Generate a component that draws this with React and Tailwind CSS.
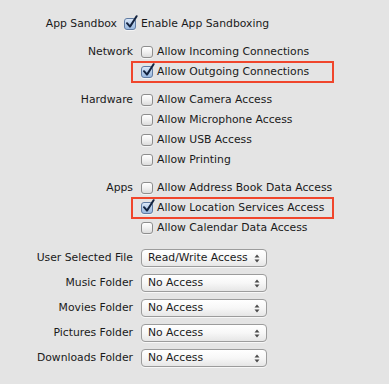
import React from "react";

function Check({ checked }) {
  return (
    <span className="relative inline-block w-[12px] h-[12px] shrink-0">
      <span
        className={
          checked
            ? "absolute inset-0 rounded-[3px] border border-[#5f7ba3] bg-gradient-to-b from-[#dbe8f8] via-[#b5cdea] to-[#9ab9e0] shadow-[0_1px_0_rgba(255,255,255,0.6)]"
            : "absolute inset-0 rounded-[3px] border border-[#8e8e8e] bg-gradient-to-b from-[#ffffff] via-[#f1f1f1] to-[#dcdcdc] shadow-[0_1px_0_rgba(255,255,255,0.6)]"
        }
      />
      {checked && (
        <svg
          className="absolute left-[1px] top-[-3px]"
          width="13"
          height="14"
          viewBox="0 0 13 14"
        >
          <path
            d="M2 8.2 L5 11.6 L11.6 1.2"
            fill="none"
            stroke="#13233f"
            strokeWidth="2"
            strokeLinecap="round"
            strokeLinejoin="round"
          />
        </svg>
      )}
    </span>
  );
}

function Row({ label, text, checked, highlight }) {
  return (
    <div className="flex items-center h-[20px]">
      <div className="w-[133px] text-right shrink-0">{label}</div>
      <div className="relative flex items-center h-[20px] ml-[8px]">
        {highlight && (
          <span className="absolute left-[-10px] top-[-1px] w-[203px] h-[22px] border-[2px] border-[#f0462c]" />
        )}
        <Check checked={checked} />
        <span className="ml-[4px]">{text}</span>
      </div>
    </div>
  );
}

function Select({ label, value }) {
  return (
    <div className="flex items-center h-[18px]">
      <div className="w-[133px] text-right shrink-0">{label}</div>
      <div className="ml-[8px] w-[126px] h-[18px] rounded-[4px] border border-[#9c9c9c] bg-gradient-to-b from-[#ffffff] via-[#f7f7f7] to-[#e6e6e6] shadow-[0_1px_0_rgba(255,255,255,0.7)] flex items-center pl-[6px] pr-[6px]">
        <span className="flex-1">{value}</span>
        <svg width="6" height="9" viewBox="0 0 6 9">
          <path d="M0.5 3.5 L3 0.5 L5.5 3.5 Z" fill="#4a4a4a" />
          <path d="M0.5 5.5 L3 8.5 L5.5 5.5 Z" fill="#4a4a4a" />
        </svg>
      </div>
    </div>
  );
}

export default function App() {
  return (
    <div className="w-[389px] h-[384px] bg-[#e4e4e4] font-['DejaVu_Sans',sans-serif] text-[10.8px] text-[#1a1a1a] pt-[14px]">
      <div className="flex items-center h-[20px]">
        <div className="w-[117px] text-right shrink-0">App Sandbox</div>
        <div className="flex items-center ml-[7px]">
          <Check checked />
          <span className="ml-[5px]">Enable App Sandboxing</span>
        </div>
      </div>

      <div className="mt-[8px]">
        <Row label="Network" text="Allow Incoming Connections" />
        <Row text="Allow Outgoing Connections" checked highlight />
      </div>

      <div className="mt-[8px]">
        <Row label="Hardware" text="Allow Camera Access" />
        <Row text="Allow Microphone Access" />
        <Row text="Allow USB Access" />
        <Row text="Allow Printing" />
      </div>

      <div className="mt-[8px]">
        <Row label="Apps" text="Allow Address Book Data Access" />
        <Row text="Allow Location Services Access" checked highlight />
        <Row text="Allow Calendar Data Access" />
      </div>

      <div className="mt-[11px] flex flex-col gap-[7px]">
        <Select label="User Selected File" value="Read/Write Access" />
        <Select label="Music Folder" value="No Access" />
        <Select label="Movies Folder" value="No Access" />
        <Select label="Pictures Folder" value="No Access" />
        <Select label="Downloads Folder" value="No Access" />
      </div>
    </div>
  );
}
